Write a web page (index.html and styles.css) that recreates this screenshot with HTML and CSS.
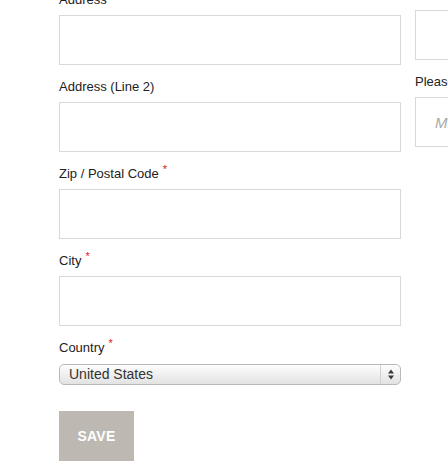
FILE: index.html
```html
<!DOCTYPE html>
<html>
<head>
<meta charset="utf-8">
<link rel="stylesheet" href="styles.css">
</head>
<body>
<div class="viewport">
  <div class="columns">
    <form class="col col-main">
      <div class="field">
        <label class="label">Address</label>
        <input class="text" type="text">
      </div>
      <div class="field">
        <label class="label">Address (Line 2)</label>
        <input class="text" type="text">
      </div>
      <div class="field">
        <label class="label">Zip / Postal Code<span class="req">*</span></label>
        <input class="text" type="text">
      </div>
      <div class="field">
        <label class="label">City<span class="req">*</span></label>
        <input class="text" type="text">
      </div>
      <div class="field field-select">
        <label class="label">Country<span class="req">*</span></label>
        <div class="select-wrap">
          <select class="select">
            <option>United States</option>
          </select>
          <span class="select-arrows">
            <svg width="10" height="13" viewBox="0 0 10 13"><path d="M5 1.5 L8 5.5 L2 5.5 Z M5 11.5 L8 7.5 L2 7.5 Z" fill="#3a3a3a"/></svg>
          </span>
        </div>
      </div>
      <button type="button" class="save">SAVE</button>
    </form>
    <div class="col col-side">
      <div class="field field-first">
        <label class="label">Phone</label>
        <input class="text" type="text">
      </div>
      <div class="field">
        <label class="label">Please enter your date of birth</label>
        <input class="text" type="text" placeholder="MM/DD/YYYY">
      </div>
    </div>
  </div>
</div>
</body>
</html>
```

FILE: styles.css
```css
html, body {
  margin: 0;
  padding: 0;
  background: #fff;
}
.viewport {
  width: 448px;
  height: 461px;
  overflow: hidden;
}
.columns {
  display: flex;
  gap: 14px;
  padding-left: 59px;
  margin-top: -10px;
  font-family: "Liberation Sans", Arial, sans-serif;
  color: #222;
}
.col {
  flex: 0 0 342px;
  width: 342px;
  display: flex;
  flex-direction: column;
  margin: 0;
}
.col-side {
  margin-top: -12px;
}
.field {
  display: flex;
  flex-direction: column;
  margin-bottom: 12px;
}
.label {
  font-size: 13px;
  line-height: 20px;
  height: 20px;
  margin-bottom: 5px;
  white-space: nowrap;
}
.field-first .label {
  margin-bottom: 12px;
}
.req {
  color: #e2121b;
  font-size: 11px;
  line-height: 0;
  position: relative;
  top: -5px;
  margin-left: 4px;
}
.text {
  box-sizing: border-box;
  width: 342px;
  height: 50px;
  border: 1px solid #d9d9d9;
  border-radius: 0;
  background: #fff;
  margin: 0;
  padding: 0 19px;
  font-family: "Liberation Sans", Arial, sans-serif;
  font-size: 15px;
  color: #333;
  outline: none;
}
.text::placeholder {
  color: #a8a8a8;
  font-style: italic;
}
.field-select {
  margin-bottom: 26px;
}
.field-select .label {
  margin-bottom: 6px;
}
.select-wrap {
  position: relative;
  width: 342px;
  height: 21px;
}
.select {
  -webkit-appearance: none;
  appearance: none;
  box-sizing: border-box;
  width: 342px;
  height: 21px;
  margin: 0;
  padding: 0 0 0 9px;
  border: 1px solid #b9b9b9;
  border-radius: 5px;
  background: linear-gradient(#fdfdfd, #f1f1f1 45%, #e2e2e2);
  font-family: "Liberation Sans", Arial, sans-serif;
  font-size: 14px;
  line-height: 19px;
  color: #333;
  outline: none;
  box-shadow: inset 0 1px 0 #fff;
}
.select-arrows {
  position: absolute;
  top: 1px;
  right: 1px;
  width: 19px;
  height: 19px;
  border-left: 1px solid #cfcfcf;
  display: flex;
  align-items: center;
  justify-content: center;
  pointer-events: none;
}
.select-arrows svg {
  display: block;
}
.save {
  align-self: flex-start;
  width: 75px;
  height: 50px;
  margin: 0;
  padding: 0;
  border: none;
  border-radius: 0;
  background: #bdb9b2;
  color: #fff;
  font-family: "Liberation Sans", Arial, sans-serif;
  font-weight: bold;
  font-size: 14px;
  letter-spacing: 0.2px;
  cursor: pointer;
}
```
